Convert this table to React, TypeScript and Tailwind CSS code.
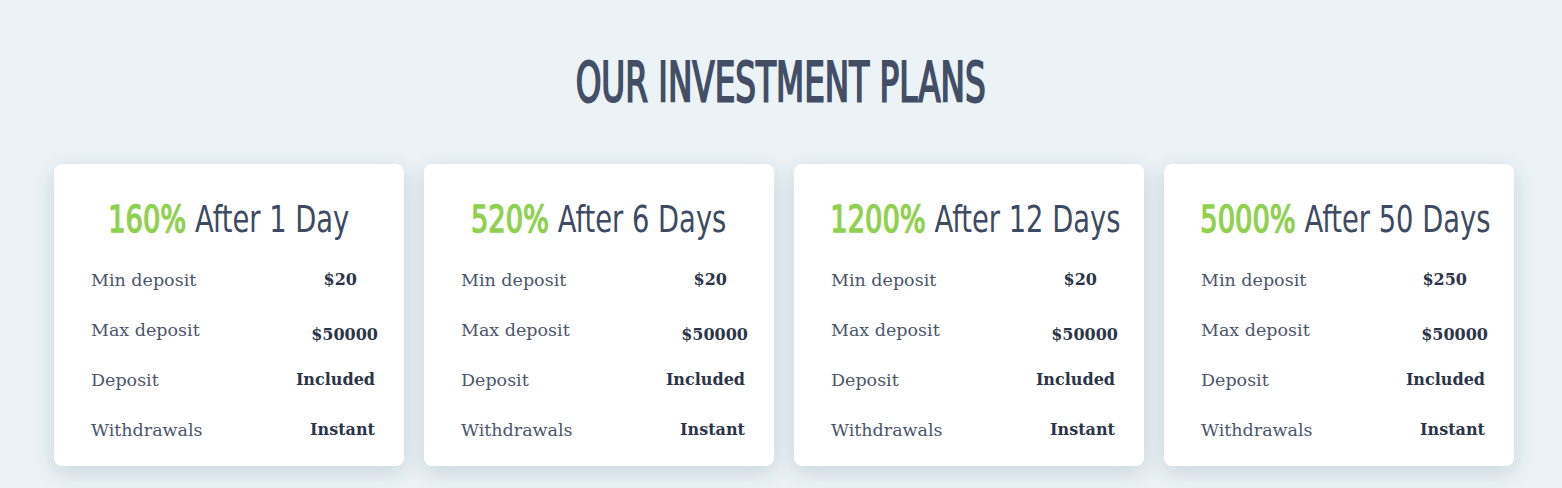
const plans = [
  { pct: "160%", term: "After 1 Day", min: "$20" },
  { pct: "520%", term: "After 6 Days", min: "$20" },
  { pct: "1200%", term: "After 12 Days", min: "$20" },
  { pct: "5000%", term: "After 50 Days", min: "$250" },
];

const Row = ({ label, value, valueClass }: { label: string; value: string; valueClass: string }) => (
  <div className="flex items-center justify-between h-[50px] pl-[37px]">
    <span className="text-[17.5px] text-[#4b566a]">{label}</span>
    <span className={`text-[16px] font-bold text-[#2c3548] ${valueClass}`}>{value}</span>
  </div>
);

export default function App() {
  return (
    <div className="min-h-[488px] bg-[#ebf3f7] pt-[52px] pb-6 font-['DejaVu_Serif',serif]">
      <h2 className="text-center font-['DejaVu_Sans_Condensed',sans-serif] text-[#434e65] text-[55px] leading-[60px] [-webkit-text-stroke:2px_#434e65]">
        <span className="inline-block scale-x-[0.66]">OUR INVESTMENT PLANS</span>
      </h2>

      <div className="flex gap-5 pl-[54px] mt-[52px]">
        {plans.map((p) => (
          <div
            key={p.pct}
            className="w-[350px] bg-white rounded-lg shadow-[0_6px_22px_rgba(20,50,70,0.16)] pt-8 pb-[11px]"
          >
            <h3 className="text-center font-['DejaVu_Sans_Condensed',sans-serif] text-[38px] leading-[46px] text-[#3d4a61] whitespace-nowrap">
              <span className="inline-block scale-x-[0.8]">
                <span className="text-[#8fd14f] [-webkit-text-stroke:1.4px_#8fd14f]">{p.pct}</span> {p.term}
              </span>
            </h3>
            <div className="mt-[13px]">
              <Row label="Min deposit" value={p.min} valueClass="pr-[47px]" />
              <Row label="Max deposit" value="$50000" valueClass="pr-[26px] mt-[10px]" />
              <Row label="Deposit" value="Included" valueClass="pr-[29px]" />
              <Row label="Withdrawals" value="Instant" valueClass="pr-[29px]" />
            </div>
          </div>
        ))}
      </div>
    </div>
  );
}
